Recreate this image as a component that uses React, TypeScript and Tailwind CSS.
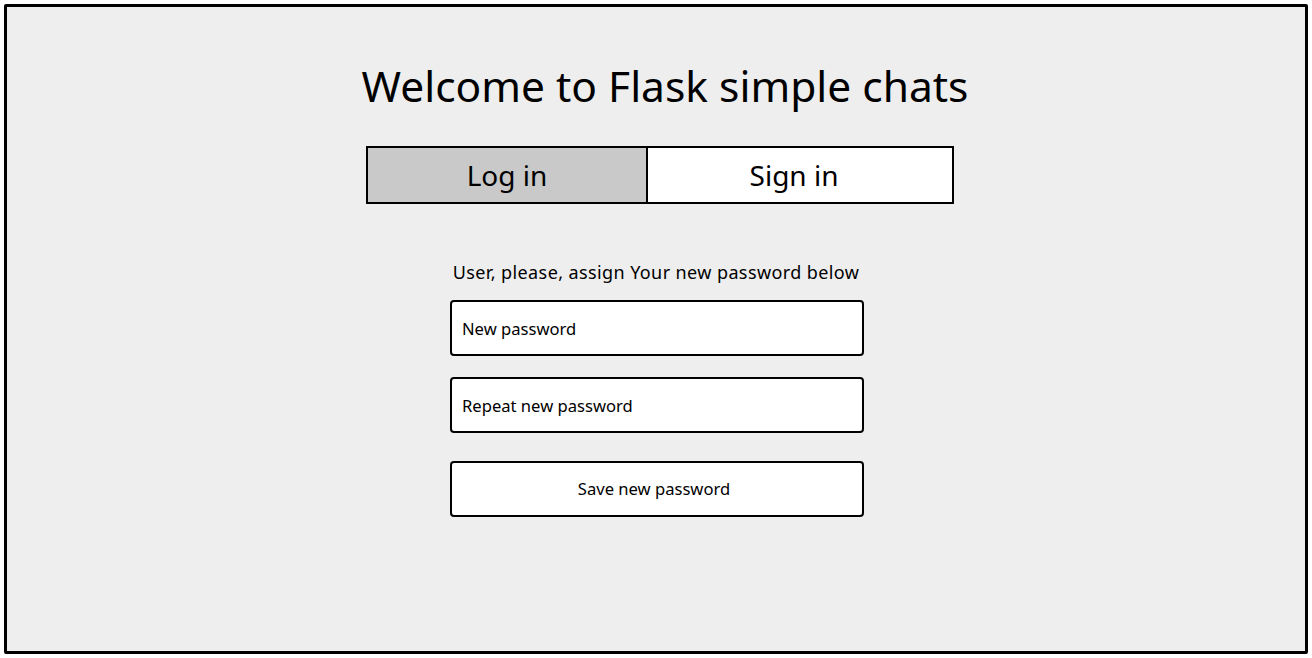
export default function App() {
  const font = { fontFamily: '"Noto Sans", "Open Sans", sans-serif' };
  return (
    <div className="h-screen w-full bg-white p-1" style={font}>
      <div className="h-full w-full border-[3px] border-black bg-[#eeeeee] rounded-[2px] flex flex-col items-center pt-[54px] text-black">
        <h1 className="text-[42.5px] leading-[50px] ml-[18px]">Welcome to Flask simple chats</h1>

        <div className="mt-[35px] ml-[8px] flex w-[588px] h-[58px] border-2 border-black">
          <button className="w-[280px] bg-[#c9c9c9] border-r-2 border-black text-[28px] leading-none">Log in</button>
          <button className="flex-1 bg-white text-[28px] leading-none pr-[12px]">Sign in</button>
        </div>

        <p className="mt-[56px] text-[18px] tracking-[0.4px] leading-6">User, please, assign Your new password below</p>

        <div className="mt-[16px] ml-[2px] flex flex-col w-[414px]">
          <input
            className="h-[56px] bg-white border-2 border-black rounded-[4px] px-[10px] text-[16.6px] placeholder:text-black outline-none"
            placeholder="New password"
            type="password"
          />
          <input
            className="mt-[21px] h-[56px] bg-white border-2 border-black rounded-[4px] px-[10px] text-[16.6px] placeholder:text-black outline-none"
            placeholder="Repeat new password"
            type="password"
          />
          <button className="mt-[28px] h-[56px] bg-white border-2 border-black rounded-[4px] text-[16.6px] pr-[6px]">
            Save new password
          </button>
        </div>
      </div>
    </div>
  );
}
